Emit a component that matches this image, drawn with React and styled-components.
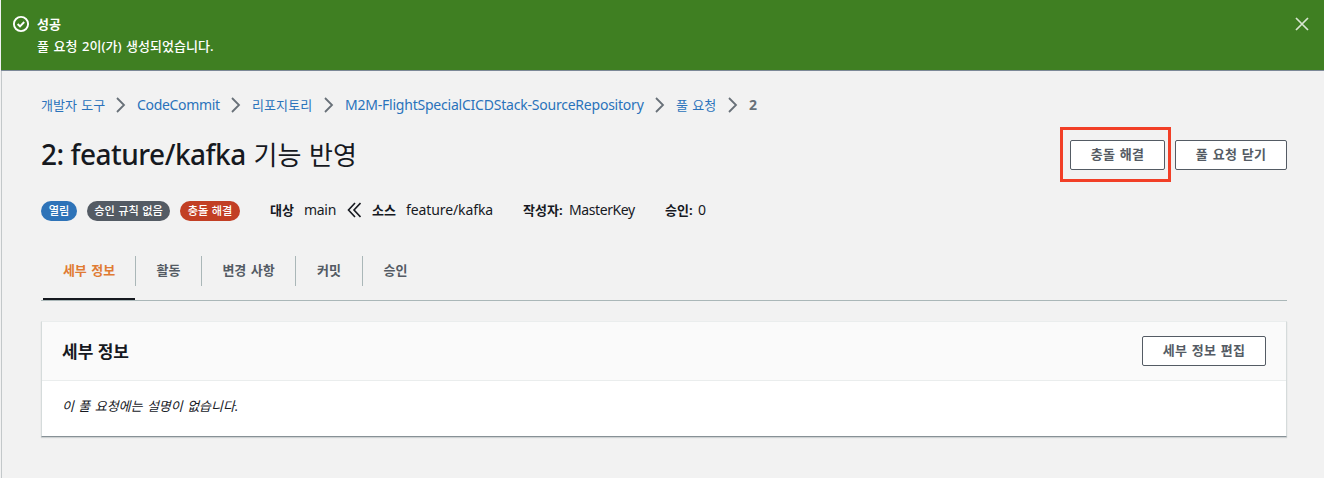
import React from "react";
import styled, { createGlobalStyle } from "styled-components";

const Global = createGlobalStyle`
  * { box-sizing: border-box; }
  body {
    margin: 0;
    background: #f2f2f2;
    color: #16191f;
    font-family: "Noto Sans", "Noto Sans CJK KR", sans-serif;
    font-size: 13px;
    line-height: 22px;
    word-spacing: 1px;
  }
`;

const Page = styled.div`
  height: 478px;
  padding-left: 1px;
  display: flex;
  flex-direction: column;
  overflow: hidden;
`;

const Flash = styled.header`
  flex: 0 0 71px;
  display: flex;
  align-items: flex-start;
  padding: 13px 14px 0 11px;
  background: #3f7f22;
  border-bottom: 1px solid #7d8998;
  color: #fff;
`;

const FlashIcon = styled.svg`
  flex: none;
  width: 18px;
  height: 18px;
  margin: 2px 7px 0 0;
`;

const FlashText = styled.div`
  flex: 1;
`;

const FlashTitle = styled.div`
  font-weight: 700;
  line-height: 22px;
`;

const CloseButton = styled.button`
  width: 16px;
  height: 16px;
  margin-top: 3px;
  padding: 0;
  border: 0;
  background: none;
  color: #d9e6d3;
  display: flex;
`;

const Main = styled.main`
  flex: 1;
  border-left: 1px solid #c3c8ca;
  padding: 23px 37px 0 39px;
`;

const Text = styled.span`
  flex: none;
  width: ${(p) => (p.$w ? `${p.$w}px` : "auto")};
  font-size: ${(p) => (p.$latin ? 14 : 13)}px;
  letter-spacing: ${(p) => p.$ls || 0}px;
  font-weight: ${(p) => (p.$bold ? 700 : p.$medium ? 500 : 400)};
  white-space: nowrap;
`;

const Breadcrumbs = styled.nav`
  display: flex;
  align-items: center;
  height: 22px;
  color: #2a72bb;
`;

const Crumb = styled(Text)`
  color: ${(p) => (p.$bold ? "#687078" : "inherit")};
`;

const Chevron = styled.svg`
  flex: none;
  width: 10px;
  height: 16px;
  margin: 0 11px 0 12px;
`;

const TitleRow = styled.div`
  display: flex;
  justify-content: space-between;
  height: 54px;
  margin-top: 12px;
`;

const Title = styled.h1`
  margin: 10px 0 0;
  font-size: 26px;
  line-height: 34px;
  font-weight: 400;
  word-spacing: 1px;
  white-space: nowrap;
`;

const TitleBranch = styled.span`
  font-size: 28px;
  line-height: 1;
  font-weight: 500;
  letter-spacing: -0.5px;
  word-spacing: 0;
`;

const Actions = styled.div`
  display: flex;
  align-items: center;
  gap: 4px;
`;

const Highlight = styled.div`
  width: 111px;
  height: 55px;
  margin-bottom: 1px;
  padding: 1px 3px 0 7px;
  border: 3px solid #f23f27;
  display: flex;
  align-items: center;
`;

const Button = styled.button`
  width: ${(p) => p.$w}px;
  height: 30px;
  padding: 0 0 2px;
  border: 1px solid #545b64;
  border-radius: 2px;
  background: #fff;
  color: #545b64;
  font: inherit;
  font-weight: 700;
  line-height: 26px;
  letter-spacing: 0.25px;
  word-spacing: 1px;
  white-space: nowrap;
`;

const MetaRow = styled.div`
  display: flex;
  align-items: center;
  height: 22px;
  margin-top: 17px;
`;

const Badge = styled.span`
  flex: none;
  width: ${(p) => p.$w}px;
  height: 20px;
  margin: 1px 10px 0 0;
  border-radius: 10px;
  background: ${(p) => p.$color};
  color: #fff;
  font-size: 11.2px;
  font-weight: 500;
  line-height: 19px;
  word-spacing: 0.5px;
  text-align: center;
  white-space: nowrap;
`;

const Meta = styled.span`
  display: flex;
  align-items: center;
  margin-left: ${(p) => p.$ml || 0}px;
`;

const DoubleLeft = styled.svg`
  flex: none;
  width: 14px;
  height: 16px;
  margin: 0 11px 0 0;
`;

const Tabs = styled.div`
  display: flex;
  height: 46px;
  margin-top: 34px;
  padding-left: 2px;
  border-bottom: 1px solid #aab7b8;
`;

const Tab = styled.div`
  width: ${(p) => p.$w}px;
  height: 45px;
  color: ${(p) => (p.$active ? "#e07b33" : "#545b64")};
  font-weight: 700;
  text-align: center;
  line-height: 30px;
  border-bottom: 2px solid ${(p) => (p.$active ? "#16191f" : "transparent")};
`;

const TabDivider = styled.div`
  width: 1px;
  height: 30px;
  margin-top: 1px;
  background: #aab7b8;
`;

const Card = styled.section`
  height: 116px;
  margin-top: 20px;
  background: #fff;
  border: 1px solid #d5dbdb;
  border-top-color: #eaeded;
  border-bottom-color: #879196;
  box-shadow: 0 1px 1px rgba(0, 28, 36, 0.15);
`;

const CardHeader = styled.div`
  display: flex;
  align-items: center;
  justify-content: space-between;
  height: 59px;
  padding: 0 20px;
  background: #fafafa;
  border-bottom: 1px solid #eaeded;
`;

const CardTitle = styled.h2`
  margin: 2px 0 0;
  font-size: 17px;
  line-height: 22px;
  font-weight: 700;
  word-spacing: 0;
`;

const CardBody = styled.p`
  margin: 0;
  padding: 14px 20px;
  font-style: italic;
`;

const Separator = () => (
  <Chevron viewBox="0 0 10 16" fill="none" stroke="#687078" strokeWidth="1.8">
    <path d="M1 1l7 7-7 7" />
  </Chevron>
);

const crumbs = [
  { label: "개발자 도구", w: 63 },
  { label: "CodeCommit", w: 82, latin: true, ls: -0.32 },
  { label: "리포지토리", w: 60, ls: 0.1 },
  { label: "M2M-FlightSpecialCICDStack-SourceRepository", w: 298, latin: true, ls: -0.22 },
  { label: "풀 요청", w: 40 },
];

const tabs = [
  { label: "세부 정보", w: 92, active: true },
  { label: "활동", w: 65 },
  { label: "변경 사항", w: 93 },
  { label: "커밋", w: 66 },
  { label: "승인", w: 65 },
];

export default function App() {
  return (
    <Page>
      <Global />
      <Flash>
        <FlashIcon viewBox="0 0 18 18" fill="none" stroke="#fff" strokeWidth="1.9">
          <circle cx="9" cy="9" r="7.1" />
          <path d="M5.6 9l2.4 2.300 4.200-4.300" />
        </FlashIcon>
        <FlashText>
          <FlashTitle>성공</FlashTitle>
          <Text $medium $ls={0.05}>풀 요청 2이(가) 생성되었습니다.</Text>
        </FlashText>
        <CloseButton aria-label="닫기">
          <svg width="16" height="16" viewBox="0 0 16 16" fill="none" stroke="currentColor" strokeWidth="1.7">
            <path d="M2 2l12 12M14 2L2 14" />
          </svg>
        </CloseButton>
      </Flash>
      <Main>
        <Breadcrumbs>
          {crumbs.map((c) => (
            <React.Fragment key={c.label}>
              <Crumb $w={c.w} $ls={c.ls} $latin={c.latin}>{c.label}</Crumb>
              <Separator />
            </React.Fragment>
          ))}
          <Crumb $bold $latin>2</Crumb>
        </Breadcrumbs>
        <TitleRow>
          <Title>
            <TitleBranch>2: feature/kafka</TitleBranch> 기능 반영
          </Title>
          <Actions>
            <Highlight>
              <Button $w={95}>충돌 해결</Button>
            </Highlight>
            <Button $w={112}>풀 요청 닫기</Button>
          </Actions>
        </TitleRow>
        <MetaRow>
          <Badge $w={36} $color="#2e73b8">열림</Badge>
          <Badge $w={83} $color="#545b64">승인 규칙 없음</Badge>
          <Badge $w={60} $color="#c23f24">충돌 해결</Badge>
          <Meta $ml={20}>
            <Text $bold $w={34}>대상</Text>
            <Text $latin $w={43} $ls={-0.3}>main</Text>
            <DoubleLeft viewBox="0 0 14 16" fill="none" stroke="#16191f" strokeWidth="1.6">
              <path d="M8 1L1.5 8 8 15M13.5 1L7 8l6.500 7" />
            </DoubleLeft>
            <Text $bold $w={34}>소스</Text>
            <Text $latin $w={87} $ls={-0.1}>feature/kafka</Text>
          </Meta>
          <Meta $ml={30}>
            <Text $bold $w={46}>작성자:</Text>
            <Text $latin $w={66} $ls={-0.4}>MasterKey</Text>
          </Meta>
          <Meta $ml={30}>
            <Text $bold $w={33}>승인:</Text>
            <Text $latin>0</Text>
          </Meta>
        </MetaRow>
        <Tabs>
          {tabs.map((t, i) => (
            <React.Fragment key={t.label}>
              {i > 0 && <TabDivider />}
              <Tab $w={t.w} $active={t.active}>{t.label}</Tab>
            </React.Fragment>
          ))}
        </Tabs>
        <Card>
          <CardHeader>
            <CardTitle>세부 정보</CardTitle>
            <Button $w={124}>세부 정보 편집</Button>
          </CardHeader>
          <CardBody>이 풀 요청에는 설명이 없습니다.</CardBody>
        </Card>
      </Main>
    </Page>
  );
}
